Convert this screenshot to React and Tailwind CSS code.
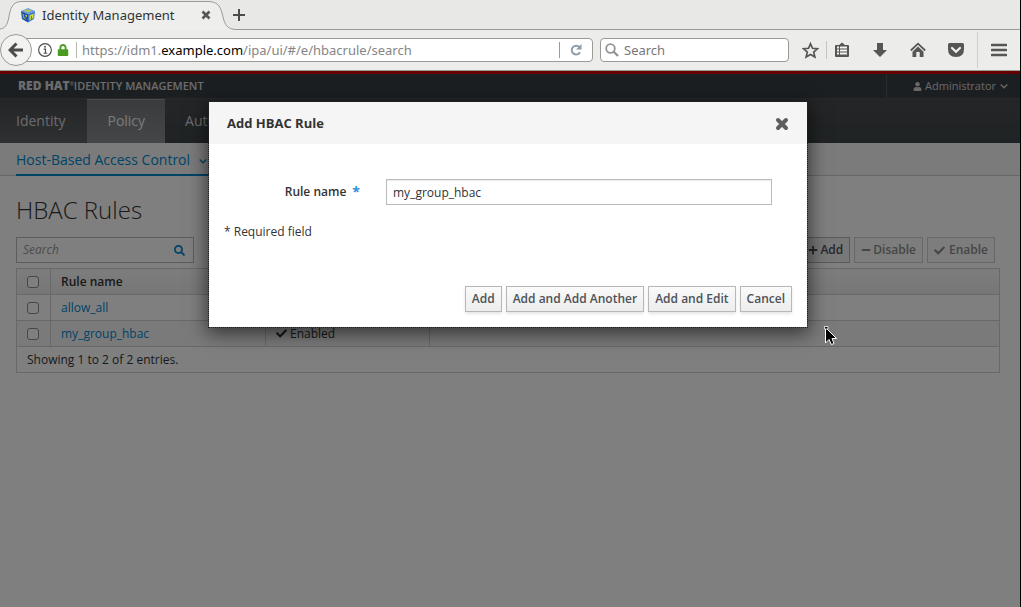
import React from "react";
import {
  FaCheck,
  FaMinus,
  FaPlus,
  FaSearch,
  FaUser,
  FaLock,
} from "react-icons/fa";

function Chevron({ className }) {
  return (
    <svg className={`h-2 w-2 ${className}`} viewBox="0 0 8 8" aria-hidden="true">
      <path d="M0.700 2.500L4 5.800L7.300 2.500" fill="none" stroke="currentColor" strokeWidth="1.300" />
    </svg>
  );
}

function TabStrip() {
  return (
    <div className="relative flex h-[30px] items-center bg-[#e8e8e7] shadow-[inset_0_-1px_0_#9a9a96]">
      <svg className="absolute left-0 top-0 h-[30px] w-[236px]" viewBox="0 0 236 30" aria-hidden="true">
        <path
          d="M0 29C5 28.500 7 25 8.500 19C10.500 8 12 1.500 22 1.500H208C219 1.500 221 8 223 17C225 25 227 29 236 29.500V30H0Z"
          fill="#eeeeec"
        />
        <path
          d="M0 29C5 28.500 7 25 8.500 19C10.500 8 12 1.500 22 1.500H208C219 1.500 221 8 223 17C225 25 227 29 236 29.500"
          fill="none"
          stroke="#9a9a96"
        />
      </svg>
      <div className="relative flex w-[211px] items-center pl-5">
        <svg className="h-4 w-4 shrink-0" viewBox="0 0 16 16" aria-hidden="true">
          <path d="M1 4L8 1L15 4L8 7Z" fill="#6f9fe0" />
          <path d="M1 4L8 7V15.500L2 12Z" fill="#1f4fa8" />
          <path d="M15 4L8 7V15.500L14 12Z" fill="#3c78cf" />
          <path d="M4 3.700L6.500 2.600L8 3.300L10 2.500L11.500 3.500L8 5.200L6.500 4.300L5.500 4.700Z" fill="#b9d03a" />
          <path d="M9.500 8.500L13.500 6.600V11L12 11.800V8.800L11 9.300V12.500L9.500 13.300Z" fill="#d4dd3c" />
          <path d="M2.500 6.500L4 7.200V10L5.500 10.700V12.500L3 11Z" fill="#7db44b" />
          <path d="M5.500 7.500L7 8.200V10L5.500 9.300Z" fill="#d4dd3c" />
        </svg>
        <span className="ml-[6px] whitespace-nowrap text-[13px] leading-5 text-[#2e3436]">Identity Management</span>
        <button type="button" aria-label="Close tab" className="ml-auto text-[#555753]">
          <svg className="h-[10px] w-[10px]" viewBox="0 0 10 10" aria-hidden="true">
            <path d="M1.500 1.500L8.500 8.500M8.500 1.500L1.500 8.500" stroke="currentColor" strokeWidth="2.600" />
          </svg>
        </button>
      </div>
      <button type="button" aria-label="New tab" className="relative ml-[21px] text-[#4a4d4a]">
        <svg className="h-[14px] w-[14px]" viewBox="0 0 14 14" aria-hidden="true">
          <path d="M7 1V13M1 7H13" stroke="currentColor" strokeWidth="2" />
        </svg>
      </button>
    </div>
  );
}

function AddressBar() {
  return (
    <div className="flex h-[41px] items-center border-b border-[#9a9a96] bg-[#ececeb]">
      <div className="relative flex min-w-0 flex-1 items-center">
        <button
          type="button"
          aria-label="Back"
          className="relative z-10 flex h-8 w-8 shrink-0 items-center justify-center rounded-full border border-[#9a9a96] bg-[#f2f2f1] text-[#4a4d4a]"
        >
          <svg className="h-4 w-4" viewBox="0 0 16 16" aria-hidden="true">
            <path d="M8.500 1.500L2 8L8.500 14.500M2.500 8H15" fill="none" stroke="currentColor" strokeWidth="3" />
          </svg>
        </button>
        <div className="-ml-2 flex h-6 min-w-0 flex-1 items-center rounded-r-sm border border-[#9a9a96] bg-white pl-[13px]">
          <svg className="h-[14px] w-[14px] shrink-0 text-[#4a4d4a]" viewBox="0 0 15 15" aria-hidden="true">
            <circle cx="7.500" cy="7.500" r="6.800" fill="none" stroke="currentColor" strokeWidth="1.200" />
            <path d="M6 6.500H8V11M6 11H10" fill="none" stroke="currentColor" strokeWidth="1.300" />
            <circle cx="7.500" cy="4" r="1" fill="currentColor" />
          </svg>
          <FaLock className="ml-[5px] h-3 w-3 shrink-0 text-[#4b9b22]" aria-hidden="true" />
          <span className="ml-[7px] h-4 w-px shrink-0 bg-[#b5b5b2]" />
          <span className="ml-[5px] flex-1 truncate text-[13px] leading-5 text-[#858585]">
            https://idm1.<span className="text-black">example.com</span>/ipa/ui/#/e/hbacrule/search
          </span>
          <span className="h-4 w-px shrink-0 bg-[#9a9a96]" />
          <button type="button" aria-label="Reload" className="flex w-8 shrink-0 justify-center text-[#8d9cab]">
            <svg className="h-3 w-3" viewBox="0 0 12 12" aria-hidden="true">
              <path d="M9.500 3.200A4.400 4.400 0 1 0 10 8.200" fill="none" stroke="currentColor" strokeWidth="2" />
              <path d="M11.500 0V5.500H6Z" fill="currentColor" />
            </svg>
          </button>
        </div>
      </div>
      <label className="ml-[7px] flex h-6 w-[189px] items-center rounded-sm border border-[#9a9a96] bg-white pl-1">
        <svg className="h-[14px] w-[14px] shrink-0 text-[#949494]" viewBox="0 0 14 14" aria-hidden="true">
          <circle cx="5.500" cy="5.500" r="4.300" fill="none" stroke="currentColor" strokeWidth="1.800" />
          <path d="M8.500 8.500L13 13" stroke="currentColor" strokeWidth="2.400" />
        </svg>
        <input
          type="text"
          aria-label="Search the web"
          placeholder="Search"
          className="ml-[5px] w-full min-w-0 bg-transparent text-[13px] leading-5 outline-none placeholder:text-[#777]"
        />
      </label>
      <div className="flex items-center self-stretch pl-[13px] text-[#555755]">
        <button type="button" aria-label="Bookmark this page">
          <svg className="h-[17px] w-[17px]" viewBox="0 0 17 17" aria-hidden="true">
            <path
              d="M8.500 1.800L10.500 6.300L15.500 6.800L11.700 10.100L12.900 15L8.500 12.400L4.100 15L5.300 10.100L1.500 6.800L6.500 6.300Z"
              fill="none"
              stroke="currentColor"
              strokeWidth="1.700"
            />
          </svg>
        </button>
        <span className="ml-[7px] h-[18px] w-px bg-[#c4c4c1]" />
        <button type="button" aria-label="Bookmarks" className="ml-[7px]">
          <svg className="h-4 w-4" viewBox="0 0 16 16" aria-hidden="true">
            <path d="M2 3H5L8 0.500L11 3H14Q15 3 15 4V14Q15 15 14 15H2Q1 15 1 14V4Q1 3 2 3Z" fill="currentColor" />
            <path d="M3 5.500H5M6 5.500H13M3 8.500H5M6 8.500H13M3 11.500H5M6 11.500H13" stroke="#f2f2f1" strokeWidth="2" />
          </svg>
        </button>
        <button type="button" aria-label="Downloads" className="ml-[23px]">
          <svg className="h-4 w-[14px]" viewBox="0 0 14 16" aria-hidden="true">
            <path d="M4 1H10V8H14L7 15L0 8H4Z" fill="currentColor" />
          </svg>
        </button>
        <button type="button" aria-label="Home" className="ml-[23px]">
          <svg className="h-4 w-4" viewBox="0 0 16 16" aria-hidden="true">
            <path d="M0.800 8.500L8 1.700L15.200 8.500" fill="none" stroke="currentColor" strokeWidth="1.800" />
            <path d="M8 4.500L13.500 9.700V15H9.700V10H6.300V15H2.500V9.700Z" fill="currentColor" />
          </svg>
        </button>
        <button type="button" aria-label="Save to Pocket" className="ml-[22px]">
          <svg className="h-4 w-4" viewBox="0 0 16 16" aria-hidden="true">
            <path d="M1.500 1H14.500Q16 1 16 2.500V7Q16 15 8 15Q0 15 0 7V2.500Q0 1 1.500 1Z" fill="currentColor" />
            <path d="M4 6L8 9.800L12 6" fill="none" stroke="#f2f2f1" strokeWidth="2.200" strokeLinecap="round" />
          </svg>
        </button>
        <span className="ml-[13px] h-9 w-px bg-[#cfcfcd]" />
        <button type="button" aria-label="Open menu" className="ml-[13px] mr-[13px]">
          <svg className="h-[14px] w-4" viewBox="0 0 16 14" aria-hidden="true">
            <path d="M1 2H15M1 7H15M1 12H15" stroke="currentColor" strokeWidth="2.600" strokeLinecap="round" />
          </svg>
        </button>
      </div>
    </div>
  );
}

function AppHeader() {
  return (
    <header>
      <div className="flex h-[28px] items-stretch justify-between border-b border-t-[3px] border-b-[#515356] border-t-[#cc0000] bg-[#393f44]">
        <div className="flex items-center pl-[18px] text-[11px] leading-4 text-[#d8d8d8]">
          <b className="text-[12px] font-extrabold">RED HAT</b>
          <sup className="text-[5px]">®</sup>
          <span className="font-semibold">IDENTITY MANAGEMENT</span>
        </div>
        <button
          type="button"
          className="flex items-center border-l border-[#53565b] pl-[26px] pr-3 text-[11px] leading-4 text-[#d2d2d2]"
        >
          <FaUser className="mr-[3px] h-[9px] w-[9px]" aria-hidden="true" />
          Administrator
          <Chevron className="ml-1" />
        </button>
      </div>
      <nav aria-label="Primary" className="flex h-[44px] bg-linear-to-b from-[#494b4d] to-[#3f474b] text-[14px] leading-5 text-[#d8d8d8]">
        <a href="#identity" className="flex items-center bg-linear-to-b from-[#464a4d] to-[#5d6266] pl-4 pr-[22px]">
          Identity
        </a>
        <a
          href="#policy"
          className="flex items-center bg-linear-to-b from-[#747678] to-[#8a8d90] px-5 text-[#f5f5f5] shadow-[inset_0_1px_0_#949699]"
        >
          Policy
        </a>
        <a href="#authentication" className="flex items-center px-5">
          Authentication
        </a>
      </nav>
      <nav aria-label="Policy" className="flex h-[33px] items-stretch border-b border-[#cecece] bg-[#f6f6f6] pl-4 text-[14px] leading-5">
        <a
          href="#hbac"
          className="-mb-px flex items-center pr-2 text-[#0088ce] shadow-[inset_0_-2px_0_#0088ce]"
        >
          Host-Based Access Control
          <Chevron className="ml-[9px] mt-[2px]" />
        </a>
        <a href="#krbtpolicy" className="ml-[436px] flex items-center text-[#4d5258]">
          Kerberos Ticket Policy
        </a>
      </nav>
    </header>
  );
}

const rules = [
  { name: "allow_all", description: "" },
  { name: "my_group_hbac", description: "" },
];

const cell = "border border-[#d1d1d1] px-[10px]";
const headCell = "border-y border-[#d1d1d1] px-[10px] font-semibold";
const box =
  "block h-3 w-3 appearance-none rounded-[3px] border border-[#8c8c8c] bg-white";
const toolButton = "flex h-[26px] items-center gap-[2px] border px-[6px]";

function RulesPage() {
  return (
    <main className="px-4 pr-5 text-[12px] leading-4 text-[#333]">
      <h1 className="mt-[18px] text-[24px] font-light leading-8 text-[#333]">HBAC Rules</h1>
      <div className="mt-[11px] flex items-center justify-between">
        <div className="flex h-[26px] w-[178px] items-center border border-[#bbb] bg-white px-[6px]">
          <input
            type="text"
            aria-label="Search rules"
            placeholder="Search"
            className="w-full min-w-0 bg-transparent outline-none placeholder:italic placeholder:text-[#999]"
          />
          <button type="button" aria-label="Run search" className="mr-[2px] text-[#0088ce]">
            <FaSearch className="h-[11px] w-[11px]" aria-hidden="true" />
          </button>
        </div>
        <div className="mr-[5px] flex gap-1 font-semibold">
          <button type="button" className={`${toolButton} border-[#b7b7b7] bg-[#f1f1f1] text-[#4d5258]`}>
            <FaPlus className="h-[10px] w-[10px]" aria-hidden="true" />
            Add
          </button>
          <button type="button" disabled className={`${toolButton} border-[#d1d1d1] bg-[#fafafa] text-[#8b8d8f]`}>
            <FaMinus className="h-[10px] w-[10px]" aria-hidden="true" />
            Disable
          </button>
          <button type="button" disabled className={`${toolButton} border-[#d1d1d1] bg-[#fafafa] text-[#8b8d8f]`}>
            <FaCheck className="mr-[2px] h-[11px] w-[11px]" aria-hidden="true" />
            Enable
          </button>
        </div>
      </div>
      <table className="mt-[5px] w-full table-fixed border-collapse text-left">
        <colgroup>
          <col className="w-[34px]" />
          <col className="w-[215px]" />
          <col className="w-[164px]" />
          <col />
        </colgroup>
        <thead>
          <tr className="h-[26px] bg-linear-to-b from-[#fafafa] to-[#ededed]">
            <th className={cell}>
              <input type="checkbox" aria-label="Select all rules" className={box} />
            </th>
            <th className={headCell}>Rule name</th>
            <th className={headCell}>Status</th>
            <th className={`${headCell} border-r`}>Description</th>
          </tr>
        </thead>
        <tbody>
          {rules.map((rule) => (
            <tr key={rule.name} className="h-[26px] bg-white even:bg-[#f5f5f5]">
              <td className={cell}>
                <input type="checkbox" aria-label={`Select ${rule.name}`} className={box} />
              </td>
              <td className={cell}>
                <a href={`#${rule.name}`} className="text-[#0088ce]">
                  {rule.name}
                </a>
              </td>
              <td className={cell}>
                <span className="flex items-center gap-[3px]">
                  <FaCheck className="h-[11px] w-[11px]" aria-hidden="true" />
                  Enabled
                </span>
              </td>
              <td className={cell}>{rule.description}</td>
            </tr>
          ))}
        </tbody>
        <tfoot>
          <tr className="h-[26px]">
            <td colSpan={4} className={cell}>
              Showing 1 to 2 of 2 entries.
            </td>
          </tr>
        </tfoot>
      </table>
    </main>
  );
}

const dialogButton =
  "h-[26px] border border-[#b7b7b7] bg-linear-to-b from-[#fafafa] to-[#ededed] px-[6px] font-semibold text-[#4d5258] shadow-[0_2px_3px_rgba(3,3,3,0.1)]";

function AddRuleDialog() {
  return (
    <div
      role="dialog"
      aria-labelledby="dialog-title"
      className="w-[598px] max-w-full bg-white text-[12px] leading-4 text-[#333] shadow-[0_4px_18px_2px_rgba(0,0,0,0.6)] outline-1 outline-dotted outline-[#222]"
    >
      <div className="flex h-[42px] items-center justify-between bg-[#f5f5f5] px-[18px]">
        <h2 id="dialog-title" className="text-[13px] font-bold leading-5">
          Add HBAC Rule
        </h2>
        <button type="button" aria-label="Close" className="pt-[2px] text-[#5e5e5e]">
          <svg className="h-[14px] w-[14px]" viewBox="0 0 14 14" aria-hidden="true">
            <path d="M3 3L11 11M11 3L3 11" stroke="currentColor" strokeWidth="4" strokeLinecap="round" />
          </svg>
        </button>
      </div>
      <form className="px-[15px] pb-[15px] pt-[35px]" onSubmit={(e) => e.preventDefault()}>
        <div className="flex items-center pr-5">
          <label htmlFor="rule-name" className="flex w-[162px] shrink-0 justify-end pr-[26px] font-semibold">
            Rule name
            <span className="ml-[6px] text-[14px] font-bold text-[#2b8fe0]">*</span>
          </label>
          <input
            id="rule-name"
            type="text"
            defaultValue="my_group_hbac"
            className="h-[26px] min-w-0 flex-1 border border-[#bbb] px-[6px] shadow-[inset_0_1px_1px_rgba(3,3,3,0.08)] outline-none"
          />
        </div>
        <p className="mt-[19px]">* Required field</p>
        <div className="mt-[46px] flex justify-end gap-1">
          <button type="submit" className={dialogButton}>Add</button>
          <button type="button" className={dialogButton}>Add and Add Another</button>
          <button type="button" className={dialogButton}>Add and Edit</button>
          <button type="button" className={dialogButton}>Cancel</button>
        </div>
      </form>
    </div>
  );
}

export default function App() {
  return (
    <div className="flex min-h-screen flex-col border-r border-black bg-white font-['Open_Sans','Noto_Sans',sans-serif]">
      <div className="font-['Noto_Sans','Open_Sans',sans-serif]">
        <TabStrip />
        <AddressBar />
      </div>
      <div className="relative flex-1">
        <AppHeader />
        <RulesPage />
        <div className="absolute inset-0 flex items-start justify-center bg-black/50 pr-1 pt-[31px]">
          <AddRuleDialog />
        </div>
        <svg className="absolute left-[824px] top-[255px] h-5 w-[14px]" viewBox="0 0 14 20" aria-hidden="true">
          <path
            d="M1.500 1.500V17L5 13.500L7.500 18.500L10 17.500L8 12.500H12.500Z"
            fill="#000"
            stroke="#fff"
            strokeWidth="1"
          />
          <path d="M0.500 0.500H4V3H0.500Z" fill="#000" stroke="#fff" strokeWidth="0.800" />
        </svg>
      </div>
    </div>
  );
}
